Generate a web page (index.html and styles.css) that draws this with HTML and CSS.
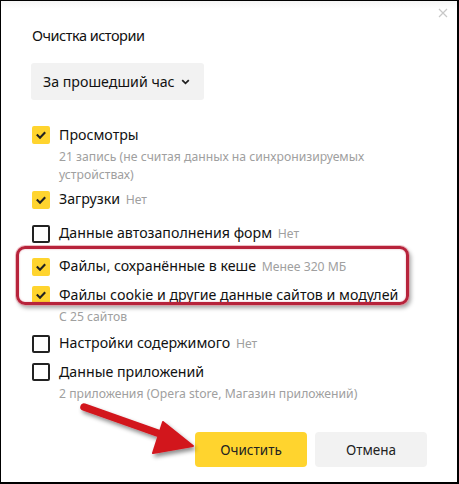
FILE: index.html
```html
<!DOCTYPE html>
<html lang="ru">
<head>
<meta charset="utf-8">
<link rel="stylesheet" href="styles.css">
</head>
<body>
<div class="frame">
  <div class="topband"></div>
  <svg class="close" width="10" height="10" viewBox="0 0 10 10"><path d="M1 1L9 9M9 1L1 9" stroke="#c8c8c8" stroke-width="1.2" fill="none"/></svg>
  <h1 class="title">Очистка истории</h1>
  <div class="select">
    <span>За прошедший час</span>
    <svg class="chev" width="9" height="6" viewBox="0 0 9 6"><path d="M1.2 1.2L4.5 4.3L7.8 1.2" stroke="#222" stroke-width="1.8" fill="none"/></svg>
  </div>
  <div class="list">
    <div class="item first">
      <span class="cb on"><svg width="12" height="10" viewBox="0 0 12 10"><path d="M1.8 4.6L5 7.7L10.2 2.3" stroke="#222" stroke-width="2.1" fill="none"/></svg></span>
      <span class="label">Просмотры</span>
      <div class="sub">21 запись (не считая данных на синхронизируемых<br>устройствах)</div>
    </div>
    <div class="item m5">
      <span class="cb on"><svg width="12" height="10" viewBox="0 0 12 10"><path d="M1.8 4.6L5 7.7L10.2 2.3" stroke="#222" stroke-width="2.1" fill="none"/></svg></span>
      <span class="label">Загрузки <span class="note">Нет</span></span>
    </div>
    <div class="item m13">
      <span class="cb"></span>
      <span class="label">Данные автозаполнения форм <span class="note">Нет</span></span>
    </div>
    <div class="item m12">
      <span class="cb on"><svg width="12" height="10" viewBox="0 0 12 10"><path d="M1.8 4.6L5 7.7L10.2 2.3" stroke="#222" stroke-width="2.1" fill="none"/></svg></span>
      <span class="label">Файлы, сохранённые в кеше <span class="note">Менее 320 МБ</span></span>
    </div>
    <div class="item m8">
      <span class="cb on"><svg width="12" height="10" viewBox="0 0 12 10"><path d="M1.8 4.6L5 7.7L10.2 2.3" stroke="#222" stroke-width="2.1" fill="none"/></svg></span>
      <span class="label">Файлы cookie и другие данные сайтов и модулей</span>
      <div class="sub">С 25 сайтов</div>
    </div>
    <div class="item m7">
      <span class="cb"></span>
      <span class="label">Настройки содержимого <span class="note">Нет</span></span>
    </div>
    <div class="item m8">
      <span class="cb"></span>
      <span class="label">Данные приложений</span>
      <div class="sub">2 приложения (Opera store, Магазин приложений)</div>
    </div>
  </div>
  <div class="buttons">
    <button class="btn primary">Очистить</button>
    <button class="btn">Отмена</button>
  </div>
  <div class="highlight"></div>
  <svg class="arrow" width="459" height="484" viewBox="0 0 459 484">
    <defs>
      <filter id="sh" x="-20%" y="-20%" width="140%" height="140%">
        <feDropShadow dx="2" dy="3" stdDeviation="2" flood-color="#000" flood-opacity="0.45"/>
      </filter>
    </defs>
    <g filter="url(#sh)">
      <path d="M84 407L166 436" stroke="#d2141e" stroke-width="7.5" stroke-linecap="round" fill="none"/>
      <path d="M163 422L193 446L153 453Z" fill="#d2141e" stroke="#d2141e" stroke-width="2" stroke-linejoin="round"/>
    </g>
  </svg>
</div>
</body>
</html>
```
FILE: styles.css
```css
* { box-sizing: border-box; }
html, body { margin: 0; padding: 0; background: #fff; }
body { font-family: "Noto Sans", "Open Sans", sans-serif; color: #1a1a1a; }

.frame {
  position: relative;
  width: 459px;
  height: 484px;
  border-style: solid;
  border-color: #000;
  border-width: 1px 2px 2px 1px;
  padding: 22px 30px 0 30px;
  overflow: hidden;
  background: #fff;
}

.topband {
  position: absolute;
  left: 0; right: 0; top: 0;
  height: 8px;
  background: linear-gradient(#f5f5f5, #fff);
}

.close { position: absolute; right: 9px; top: 7px; }

.title {
  margin: 0;
  font-size: 14.5px;
  font-weight: 400;
  letter-spacing: -0.5px;
  line-height: 24px;
  color: #111;
  padding-left: 1px;
}

.select {
  margin-top: 16px;
  width: 173px;
  height: 37px;
  background: #f2f2f2;
  border-radius: 3px;
  display: flex;
  align-items: center;
  justify-content: space-between;
  padding: 0 14px 0 12px;
  font-size: 14.2px;
  color: #111;
}
.chev { margin-top: 1px; }

.list { display: flex; flex-direction: column; }

.item {
  display: grid;
  grid-template-columns: 18px 1fr;
  column-gap: 10px;
  align-items: center;
}
.item.first { margin-top: 25px; }
.item.m5 { margin-top: 5px; }
.item.m7 { margin-top: 7px; }
.item.m8 { margin-top: 8px; }
.item.m12 { margin-top: 12px; }
.item.m13 { margin-top: 13px; }

.cb {
  width: 18px;
  height: 18px;
  border-radius: 2px;
  border: 2px solid #222;
  background: #fff;
  display: flex;
  align-items: center;
  justify-content: center;
  margin-left: 1px;
}
.cb.on { background: #ffd42e; border-color: #ffd42e; }

.label {
  font-size: 14.2px;
  line-height: 20px;
  color: #111;
  white-space: nowrap;
}
.note { font-size: 12.2px; color: #a0a0a0; margin-left: 2px; }

.sub {
  grid-column: 2;
  margin-top: 3px;
  font-size: 12.2px;
  line-height: 18px;
  color: #a0a0a0;
}

.buttons {
  margin-top: 29px;
  display: flex;
  justify-content: flex-end;
  gap: 8px;
}
.btn {
  width: 112px;
  height: 35px;
  border: none;
  border-radius: 4px;
  background: #f2f2f2;
  font-family: "Noto Sans", "Open Sans", sans-serif;
  font-size: 13.5px;
  color: #222;
  padding: 0;
}
.btn.primary { background: #ffd42e; }

.highlight {
  position: absolute;
  left: 15px;
  top: 245px;
  width: 393px;
  height: 59px;
  border: 3px solid #b7233b;
  border-radius: 9px;
  box-shadow: 0 0 0 1px rgba(230, 150, 160, 0.6), 2px 3px 4px rgba(0, 0, 0, 0.35), inset 0 0 2px rgba(183, 35, 59, 0.4);
}

.arrow { position: absolute; left: -1px; top: -1px; }
```
